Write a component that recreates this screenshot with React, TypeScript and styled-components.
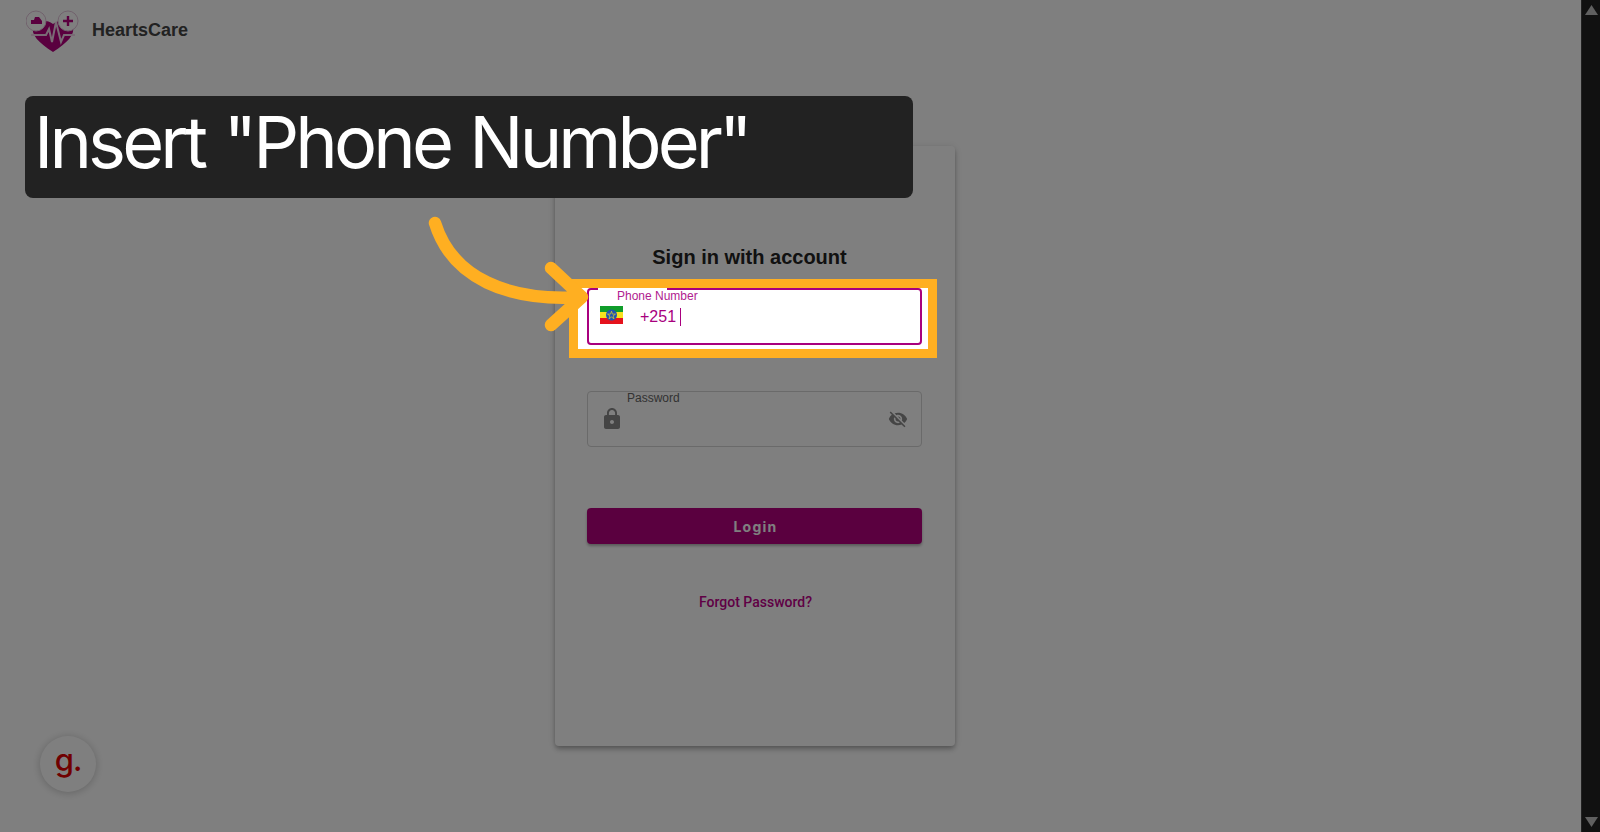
import React from 'react';
import styled, { createGlobalStyle } from 'styled-components';

const GlobalStyle = createGlobalStyle`
  html,
  body {
    margin: 0;
    height: 100%;
    overflow: hidden;
    background: #fff;
    font-family: 'Liberation Sans', Arial, sans-serif;
  }
`;

const PURPLE = '#a8007e';
const ORANGE = '#ffaf21';

const Page = styled.div`
  display: flex;
  width: 1600px;
  height: 832px;
  overflow: hidden;
  position: relative;
`;

const Main = styled.main`
  flex: 1;
  position: relative;
  background: #fff;
`;

const Header = styled.header`
  display: flex;
  align-items: center;
  gap: 12px;
  height: 60px;
  padding-left: 26px;
`;

const Brand = styled.span`
  font-size: 18px;
  font-weight: 700;
  color: #444;
`;

const Card = styled.section`
  box-sizing: border-box;
  width: 400px;
  height: 600px;
  margin: 86px 0 0 555px;
  padding: 100px 15px 0 32px;
  border-radius: 4px;
  background: #fff;
  box-shadow: 0 2px 4px -1px rgba(0, 0, 0, 0.2), 0 4px 5px rgba(0, 0, 0, 0.14),
    0 1px 10px rgba(0, 0, 0, 0.12);
`;

const Title = styled.h1`
  margin: 0 0 19px;
  padding-right: 28px;
  font-size: 20px;
  line-height: 23px;
  font-weight: 700;
  text-align: center;
  color: #222;
`;

const Field = styled.div<{ $active?: boolean; $gap: number }>`
  box-sizing: border-box;
  position: relative;
  display: flex;
  align-items: center;
  width: 335px;
  height: ${(p) => (p.$active ? 57 : 56)}px;
  margin-bottom: ${(p) => p.$gap}px;
  border: ${(p) => (p.$active ? `2px solid ${PURPLE}` : '1px solid #d4d4d4')};
  border-radius: 4px;
`;

const Notch = styled.span<{ $width: number }>`
  position: absolute;
  top: -2px;
  left: 9px;
  width: ${(p) => p.$width}px;
  height: 3px;
  background: #fff;
`;

const FieldLabel = styled.label<{ $active?: boolean }>`
  position: absolute;
  top: -1px;
  font-size: 12px;
  line-height: 14px;
  color: ${(p) => (p.$active ? '#b0208f' : '#666')};
`;

const PhoneLabel = styled(FieldLabel)`
  left: 28px;
`;

const PasswordLabel = styled(FieldLabel)`
  left: 39px;
`;

const PhoneRow = styled.div`
  display: flex;
  align-items: center;
  height: 22px;
  margin: -3px 0 0 11px;
`;

const DialCode = styled.span`
  margin: 4px 0 0 17px;
  font-size: 16px;
  color: ${PURPLE};
`;

const Caret = styled.span`
  width: 1px;
  height: 18px;
  margin: 4px 0 0 4px;
  background: ${PURPLE};
`;

const FieldIcon = styled.svg`
  flex: none;
  width: 24px;
  height: 24px;
  fill: #8a8a8a;
`;

const LockIcon = styled(FieldIcon)`
  margin-left: 12px;
`;

const EyeIcon = styled(FieldIcon)`
  margin-left: auto;
  margin-right: 13px;
  width: 20px;
  height: 20px;
`;

const LoginButton = styled.button`
  display: block;
  width: 335px;
  height: 36px;
  margin-bottom: 49px;
  padding: 0 0 0 2px;
  border: 0;
  border-radius: 4px;
  background: #b4007e;
  color: #fff;
  font-family: Inter, sans-serif;
  font-size: 14px;
  font-weight: 700;
  letter-spacing: 1.25px;
  box-shadow: 0 2px 3px rgba(0, 0, 0, 0.3);
`;

const ForgotLink = styled.a`
  display: block;
  box-sizing: border-box;
  width: 335px;
  padding-left: 2px;
  font-family: Roboto, sans-serif;
  font-size: 14px;
  line-height: 18px;
  font-weight: 500;
  text-align: center;
  color: #c0008a;
`;

const Fab = styled.div`
  position: absolute;
  left: 40px;
  top: 736px;
  display: flex;
  align-items: center;
  justify-content: center;
  width: 56px;
  height: 56px;
  border-radius: 50%;
  background: #fff;
  box-shadow: 0 1px 8px rgba(0, 0, 0, 0.22);
  font-family: Inter, sans-serif;
  font-size: 31px;
  font-weight: 500;
  line-height: 40px;
  letter-spacing: -1px;
  padding-bottom: 9px;
  box-sizing: border-box;
  color: #e00000;
`;

const Scrollbar = styled.aside`
  flex: none;
  display: flex;
  flex-direction: column;
  justify-content: space-between;
  align-items: center;
  box-sizing: border-box;
  width: 19px;
  padding: 5px 0;
  background: #222;
  border-left: 1px solid #444;
`;

const ScrollArrow = styled.svg`
  width: 13px;
  height: 10px;
  fill: #c0c0c0;
`;

const Spotlight = styled.div`
  position: absolute;
  left: 569px;
  top: 279px;
  box-sizing: border-box;
  width: 368px;
  height: 79px;
  border: 9px solid ${ORANGE};
  box-shadow: 0 0 0 2000px rgba(0, 0, 0, 0.5);
`;

const Callout = styled.div`
  position: absolute;
  left: 25px;
  top: 96px;
  box-sizing: border-box;
  width: 888px;
  height: 102px;
  padding-left: 9px;
  border-radius: 8px;
  background: #222;
  color: #fff;
  font-family: Inter, sans-serif;
  font-size: 72px;
  letter-spacing: -3.9px;
  word-spacing: 3px;
  line-height: 92px;
  white-space: nowrap;
`;

const Pointer = styled.svg`
  position: absolute;
  left: 420px;
  top: 210px;
  width: 180px;
  height: 130px;
  overflow: visible;
`;

const HeartLogo = () => (
  <svg width="54" height="46" viewBox="0 0 54 46">
    <path
      d="M7 19C12 13 20 12 27 17C34 12 42 13 47 19C49 28 42 35 27 45C12 35 5 28 7 19Z"
      fill="#b4007e"
    />
    <circle cx="10" cy="14" r="10" fill="#fff" stroke="#e3c4da" />
    <circle cx="42" cy="14" r="10" fill="#fff" stroke="#e3c4da" />
    <path d="M5 17v-4h3l1-3h4l3 4v3z" fill="#b4007e" />
    <path d="M42 9v10M37 14h10" stroke="#b4007e" strokeWidth="2.4" />
    <path
      d="M5 28h15l3-6 3 13 4-20 5 20 3-7h11"
      fill="none"
      stroke="#f3d7ea"
      strokeWidth="2"
    />
  </svg>
);

const EthiopiaFlag = () => (
  <svg width="23" height="18" viewBox="0 0 23 18">
    <rect width="23" height="6" fill="#0f9d2a" />
    <rect y="6" width="23" height="6" fill="#f7e11e" />
    <rect y="12" width="23" height="6" fill="#e5121c" />
    <circle cx="11.5" cy="9" r="5.5" fill="#1f53b5" />
    <path
      d="M11.5 5.2l1 2.9h3l-2.4 1.8.9 2.9-2.5-1.8-2.5 1.8.9-2.9-2.4-1.8h3z"
      fill="none"
      stroke="#e8d21d"
      strokeWidth="0.7"
    />
  </svg>
);

export default function App() {
  return (
    <Page>
      <GlobalStyle />
      <Main>
        <Header>
          <HeartLogo />
          <Brand>HeartsCare</Brand>
        </Header>
        <Card>
          <Title>Sign in with account</Title>
          <Field $active $gap={46}>
            <Notch $width={69} />
            <PhoneLabel $active>Phone Number</PhoneLabel>
            <PhoneRow>
              <EthiopiaFlag />
              <DialCode>+251</DialCode>
              <Caret />
            </PhoneRow>
          </Field>
          <Field $gap={61}>
            <PasswordLabel>Password</PasswordLabel>
            <LockIcon viewBox="0 0 24 24">
              <path d="M18 8h-1V6c0-2.76-2.24-5-5-5S7 3.24 7 6v2H6c-1.1 0-2 .9-2 2v10c0 1.1.9 2 2 2h12c1.1 0 2-.9 2-2V10c0-1.1-.9-2-2-2zm-6 9c-1.1 0-2-.9-2-2s.9-2 2-2 2 .9 2 2-.9 2-2 2zm3.1-9H8.9V6c0-1.71 1.39-3.1 3.1-3.1 1.71 0 3.1 1.39 3.1 3.1v2z" />
            </LockIcon>
            <EyeIcon viewBox="0 0 24 24">
              <path d="M12 7c2.76 0 5 2.24 5 5 0 .65-.13 1.26-.36 1.83l2.92 2.92c1.51-1.26 2.7-2.89 3.43-4.75-1.73-4.39-6-7.5-11-7.5-1.4 0-2.74.25-3.98.7l2.16 2.16C10.74 7.13 11.35 7 12 7zM2 4.27l2.28 2.28.46.46C3.08 8.3 1.78 10.02 1 12c1.73 4.39 6 7.5 11 7.5 1.55 0 3.03-.3 4.38-.84l.42.42L19.73 22 21 20.73 3.27 3 2 4.27zM7.53 9.8l1.55 1.55c-.05.21-.08.43-.08.65 0 1.66 1.34 3 3 3 .22 0 .44-.03.65-.08l1.55 1.55c-.67.33-1.41.53-2.2.53-2.76 0-5-2.24-5-5 0-.79.2-1.53.53-2.2zm4.31-.78l3.15 3.15.02-.16c0-1.66-1.34-3-3-3l-.17.01z" />
            </EyeIcon>
          </Field>
          <LoginButton>Login</LoginButton>
          <ForgotLink>Forgot Password?</ForgotLink>
        </Card>
        <Fab>g.</Fab>
      </Main>
      <Scrollbar>
        <ScrollArrow viewBox="0 0 13 10">
          <path d="M6.5 0L13 10H0z" />
        </ScrollArrow>
        <ScrollArrow viewBox="0 0 13 10">
          <path d="M0 0h13L6.5 10z" />
        </ScrollArrow>
      </Scrollbar>
      <Spotlight />
      <Callout>Insert "Phone Number"</Callout>
      <Pointer viewBox="0 0 180 130">
        <path
          d="M15 13C32 68 88 92 162 87M131 58L162 87L131 115"
          fill="none"
          stroke={ORANGE}
          strokeWidth="12.5"
          strokeLinecap="round"
          strokeLinejoin="round"
        />
      </Pointer>
    </Page>
  );
}
